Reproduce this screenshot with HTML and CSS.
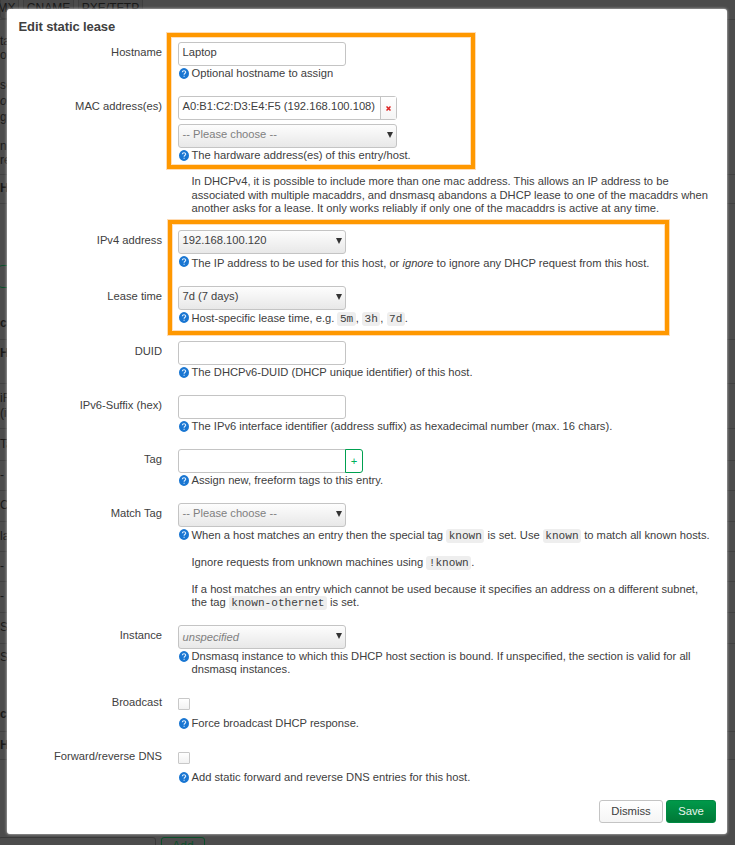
FILE: index.html
```html
<!DOCTYPE html>
<html lang="en">
<head>
<meta charset="utf-8">
<title>Edit static lease</title>
<link rel="stylesheet" href="styles.css">
</head>
<body>
<svg width="0" height="0" class="defs"><symbol id="help" viewBox="0 0 10 11"><ellipse cx="5" cy="5.5" rx="5" ry="5.4" fill="#1976d2"/><path d="M3.3 4.2C3.4 2.3 6.7 2.3 6.7 4.2C6.7 5.3 5.1 5.3 5.1 6.7M5.1 7.7v1" fill="none" stroke="#e4f1ff" stroke-width="1.1"/></symbol></svg>
<div class="page" aria-hidden="true">
  <div class="tabs"><span class="tab tab-mx">MX</span><span class="tab tab-cname">CNAME</span><span class="tab tab-pxe">PXE/TFTP</span></div>
  <div class="intro"><p>ta</p><p class="gap">or</p><p>se</p><p class="it">o.</p><p class="gap2">g</p><p>ne</p><p>re</p></div>
  <div class="line h29"><b>H</b></div>
  <div class="line actions"><i class="stub"></i><b>c</b></div>
  <div class="line h44 top"><b>H</b></div>
  <div class="line h45"><span>iF<br>(i.</span></div>
  <div class="line h32">Ta</div>
  <div class="line h30">-</div>
  <div class="line h31">C</div>
  <div class="line h30">la</div>
  <div class="line h30">-</div>
  <div class="line h31">-</div>
  <div class="line h31">S</div>
  <div class="line h88"><span>S</span><b>c</b></div>
  <div class="line h28"><b>H</b></div>
  <div class="line addbar"><span class="addinput"></span><span class="addbtn">Add</span></div>
</div>

<main class="modal">
  <h4>Edit static lease</h4>
  <div class="row r-host"><label>Hostname</label><div class="field">
    <div class="box">Laptop</div>
    <div class="help"><svg><use href="#help"/></svg><p>Optional hostname to assign</p></div>
  </div></div>
  <div class="row r-mac"><label>MAC address(es)</label><div class="field">
    <div class="box wide"><span class="mac">A0:B1:C2:D3:E4:F5 (192.168.100.108)</span><span class="del"><svg viewBox="0 0 5 5"><path d="M.5.5l4 4M4.5.5l-4 4" stroke="#d22" stroke-width="1.5"/></svg></span></div>
    <div class="box wide select muted second">-- Please choose --</div>
    <div class="help"><svg><use href="#help"/></svg><p>The hardware address(es) of this entry/host.</p></div>
    <p class="note n-mac">In DHCPv4, it is possible to include more than one mac address. This allows an IP address to be<br>associated with multiple macaddrs, and dnsmasq abandons a DHCP lease to one of the macaddrs when<br>another asks for a lease. It only works reliably if only one of the macaddrs is active at any time.</p>
  </div></div>
  <div class="row r-ip"><label>IPv4 address</label><div class="field">
    <div class="box select num">192.168.100.120</div>
    <div class="help low"><svg><use href="#help"/></svg><p>The IP address to be used for this host, or <em>ignore</em> to ignore any DHCP request from this host.</p></div>
  </div></div>
  <div class="row r-lease"><label>Lease time</label><div class="field">
    <div class="box select">7d (7 days)</div>
    <div class="help coded"><svg><use href="#help"/></svg><p>Host-specific lease time, e.g. <code>5m</code>, <code>3h</code>, <code>7d</code>.</p></div>
  </div></div>
  <div class="row"><label>DUID</label><div class="field">
    <div class="box"></div>
    <div class="help"><svg><use href="#help"/></svg><p>The DHCPv6-DUID (DHCP unique identifier) of this host.</p></div>
  </div></div>
  <div class="row"><label>IPv6-Suffix (hex)</label><div class="field">
    <div class="box"></div>
    <div class="help"><svg><use href="#help"/></svg><p>The IPv6 interface identifier (address suffix) as hexadecimal number (max. 16 chars).</p></div>
  </div></div>
  <div class="row"><label>Tag</label><div class="field">
    <div class="group"><div class="box"></div><span class="plus">+</span></div>
    <div class="help"><svg><use href="#help"/></svg><p>Assign new, freeform tags to this entry.</p></div>
  </div></div>
  <div class="row r-match"><label>Match Tag</label><div class="field">
    <div class="box select muted">-- Please choose --</div>
    <div class="help coded"><svg><use href="#help"/></svg><p>When a host matches an entry then the special tag <code>known</code> is set. Use <code>known</code> to match all known hosts.</p></div>
    <p class="note n-one">Ignore requests from unknown machines using <code>!known</code>.</p>
    <p class="note n-two">If a host matches an entry which cannot be used because it specifies an address on a different subnet,<br>the tag <code>known-othernet</code> is set.</p>
  </div></div>
  <div class="row r-inst"><label>Instance</label><div class="field">
    <div class="box select muted it unspec">unspecified</div>
    <div class="help"><svg><use href="#help"/></svg><p>Dnsmasq instance to which this DHCP host section is bound. If unspecified, the section is valid for all<br>dnsmasq instances.</p></div>
  </div></div>
  <div class="row"><label>Broadcast</label><div class="field">
    <div class="check"></div>
    <div class="help"><svg><use href="#help"/></svg><p>Force broadcast DHCP response.</p></div>
  </div></div>
  <div class="row"><label>Forward/reverse DNS</label><div class="field">
    <div class="check"></div>
    <div class="help"><svg><use href="#help"/></svg><p>Add static forward and reverse DNS entries for this host.</p></div>
  </div></div>
  <div class="buttons"><button class="dismiss">Dismiss</button><button class="save">Save</button></div>
</main>
<div class="mark mark-a"></div>
<div class="mark mark-b"></div>
</body>
</html>
```
FILE: styles.css
```css
* { box-sizing: border-box; }
body { margin: 0; width: 735px; height: 845px; overflow: hidden; background: #4c4c4c; color: #404040; font: 11.18px/13.3px "Liberation Sans", Arial, sans-serif; position: relative; }
p, h4 { margin: 0; }
.defs { position: absolute; }
.page { height: 845px; overflow: hidden; color: #181818; font-size: 12px; }
.tabs { height: 20px; display: flex; gap: 4px; border-bottom: 1px solid #404040; }
.tab { height: 19px; padding-top: 2px; border: 1px solid #3e3e3e; border-top: 0; border-radius: 0 0 3px 3px; background: #484848; text-align: center; }
.tab-mx { width: 19px; text-indent: -6px; }
.tab-cname { width: 51px; }
.tab-pxe { width: 65px; }
.intro { height: 154px; padding-top: 14px; }
.intro p { line-height: 14px; }
.intro .gap { margin-bottom: 16px; }
.intro .it { line-height: 18px; }
.intro .gap2 { margin-bottom: 15px; }
.it { font-style: italic; }
.line { border-top: 1px solid #404040; display: flex; align-items: center; }
.h28 { height: 28px; } .h29 { height: 29px; } .h30 { height: 30px; } .h31 { height: 31px; } .h32 { height: 32px; }
.h44 { height: 44px; } .h45 { height: 45px; }
.h45 { line-height: 15px; }
.top { align-items: flex-start; padding-top: 7px; }
.actions { height: 136px; flex-direction: column; align-items: flex-start; }
.stub { width: 20px; height: 23px; margin: 61px 0 29px -2px; border: 1px solid #0b4f2b; border-radius: 4px; }
.h88 { height: 88px; flex-direction: column; align-items: flex-start; gap: 44px; padding-top: 7px; justify-content: flex-start; }
.addbar { height: 90px; align-items: flex-start; padding-top: 77px; gap: 5px; }
.addinput { width: 158px; height: 24px; margin-left: -2px; border: 1px solid #393939; border-radius: 3px; }
.addbtn { width: 44px; height: 24px; border: 1px solid #0b4f2b; border-radius: 3px; color: #0b4f2b; text-align: center; padding-top: 2px; }

.modal { position: absolute; left: 7px; top: 9px; width: 720px; height: 825px; background: #fff; border-radius: 3px; box-shadow: 0 0 3px #ddd; }
h4 { height: 33px; padding: 8px 0 0 11.5px; font-size: 13px; line-height: 20px; letter-spacing: -.1px; }
.row { height: 54px; display: grid; grid-template-columns: 155px 549px; column-gap: 16px; }
.row label { text-align: right; line-height: 20px; white-space: nowrap; }
.r-mac { height: 134px; }
.r-ip { height: 56px; }
.r-lease { height: 55px; }
.r-match { height: 122px; }
.r-inst { height: 67px; }
.box { position: relative; width: 168px; height: 24px; padding-left: 3.5px; border: 1px solid #c4c4c4; border-radius: 3px; background: #fff; line-height: 19px; white-space: nowrap; }
.wide { width: 219px; }
.second { margin-top: 4px; }
.wide:not(.select) { display: flex; }
.mac { width: 198px; border-right: 1px solid #c4c4c4; }
.del { flex: 1; display: flex; align-items: center; justify-content: center; background: linear-gradient(#fff, #f5f5f5); }
.del svg { width: 5px; height: 5px; }
.select { background: linear-gradient(#fdfdfd, #e8e8e8); }
.select::after { content: ""; position: absolute; right: 3px; top: 7px; border: 3px solid transparent; border-top: 6px solid #333; border-bottom: 0; }
.muted { color: #808080; }
.unspec { line-height: 22px; }
.help { display: grid; grid-template-columns: 13.5px 1fr; }
.help svg { width: 10px; height: 11px; margin: 2px 0 0 1px; }
.help p, .note { white-space: nowrap; }
.help p { padding-top: 1px; }
.help.coded p { padding-top: 2px; }
.help.low p { padding-top: 3px; }
.note { padding-left: 13.5px; }
.n-mac { padding-top: 13px; }
.n-one { padding-top: 13px; }
.n-two { padding-top: 12.5px; }
code { padding: 1px 2.5px; border-radius: 3px; background: #eee; font: 11.1px/13px "Liberation Mono", monospace; }
.group { display: flex; }
.group .box { border-radius: 3px 0 0 3px; }
.plus { width: 18px; height: 24px; margin-left: -1px; border: 1px solid #00a050; border-radius: 0 3px 3px 0; color: #00b05a; text-align: center; line-height: 22px; position: relative; }
.check { width: 12px; height: 12px; margin: 6px 0 6px; border: 1px solid #c8c8c8; border-radius: 1px; background: linear-gradient(#fff, #f2f2f2); }
.buttons { display: flex; justify-content: flex-end; gap: 3px; padding-right: 11px; }
button { height: 23px; padding: 0 0 2px; border: 1px solid #c4c4c4; border-radius: 3px; background: linear-gradient(#fff, #f5f5f5); color: #404040; font: 11.3px "Liberation Sans", Arial, sans-serif; }
.dismiss { width: 64px; }
.save { width: 50px; border-color: #008a43; background: linear-gradient(#00994a, #007836); color: #e8f5ec; }
.mark { position: absolute; border: 4px solid #ff9800; outline: 1px solid #ffdcb4; outline-offset: 0; box-shadow: inset 0 0 0 1px #ffe0bd; }
.mark-a { left: 167px; top: 33px; width: 308px; height: 136px; }
.mark-b { left: 168px; top: 220px; width: 501px; height: 115px; }
```
